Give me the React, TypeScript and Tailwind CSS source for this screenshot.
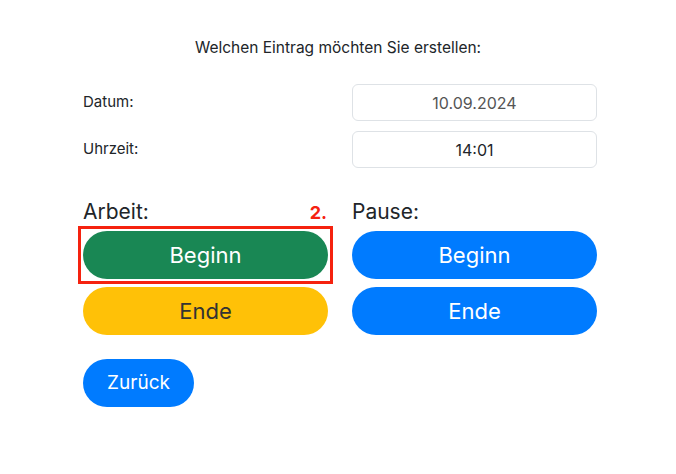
import React from "react";

const font = { fontFamily: "Inter, 'Noto Sans', sans-serif" };

export default function App() {
  return (
    <div className="w-[676px] h-[474px] bg-white text-[#212529]" style={font}>
      {/* Heading */}
      <div className="pt-[38px] text-center text-[15.5px] leading-5">
        Welchen Eintrag möchten Sie erstellen:
      </div>

      <div className="pl-[83px] pr-[79px] mt-[26px]">
        {/* Date / time rows */}
        <div className="grid grid-cols-2 gap-x-6 gap-y-[10px]">
          <div className="flex items-center text-[15px]">Datum:</div>
          <div className="h-[37px] border border-[#dee2e6] rounded-md flex items-center justify-center text-[16px] text-[#555]">
            10.09.2024
          </div>
          <div className="flex items-center text-[15px]">Uhrzeit:</div>
          <div className="h-[37px] border border-[#dee2e6] rounded-md flex items-center justify-center text-[16px]">
            14:01
          </div>
        </div>

        {/* Buttons */}
        <div className="grid grid-cols-2 gap-x-6 mt-[32px]">
          <div>
            <div className="flex items-center justify-between h-6">
              <span className="text-[21px]">Arbeit:</span>
              <span className="text-[18px] font-bold text-[#f5220f] mr-[1px]">2.</span>
            </div>
            <div className="relative mt-[7px]">
              <button className="w-full h-12 rounded-full bg-[#198754] text-white text-[22px]">
                Beginn
              </button>
              {/* annotation frame */}
              <div className="absolute -left-[5px] -right-[5px] -top-[5px] -bottom-[5px] border-[3px] border-[#f5220f] pointer-events-none" />
            </div>
            <button className="w-full h-12 mt-2 rounded-full bg-[#ffc107] text-[#333] text-[22px]">
              Ende
            </button>
          </div>
          <div>
            <div className="flex items-center h-6">
              <span className="text-[21px]">Pause:</span>
            </div>
            <button className="w-full h-12 mt-[7px] rounded-full bg-[#007bff] text-white text-[22px]">
              Beginn
            </button>
            <button className="w-full h-12 mt-2 rounded-full bg-[#007bff] text-white text-[22px]">
              Ende
            </button>
          </div>
        </div>

        <button className="mt-6 w-[111px] h-12 rounded-full bg-[#007bff] text-white text-[19px]">
          Zurück
        </button>
      </div>
    </div>
  );
}
